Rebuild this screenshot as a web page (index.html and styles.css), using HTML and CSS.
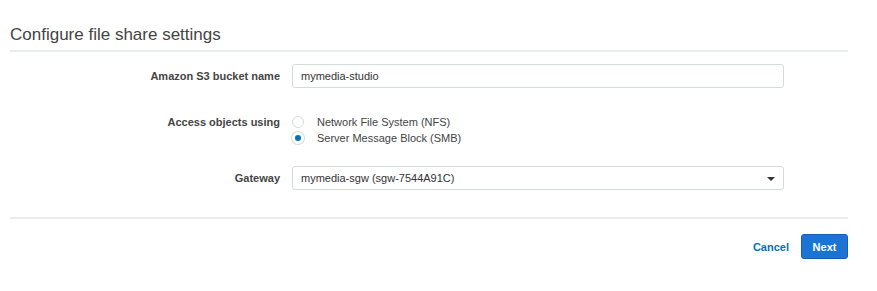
FILE: index.html
```html
<!DOCTYPE html>
<html lang="en">

<head>
    <meta charset="utf-8">
    <title>Configure file share settings</title>
    <link rel="stylesheet" href="styles.css">
</head>

<body>
    <div class="panel">
        <h2 class="titel">Configure file share settings</h2>

        <div class="felt">
            <label class="etiket">Amazon S3 bucket name</label>
            <div class="indhold">
                <div class="boks">mymedia-studio</div>
            </div>
        </div>

        <div class="felt radiofelt">
            <label class="etiket">Access objects using</label>
            <div class="indhold">
                <div class="valg"><span class="radio"></span>Network File System (NFS)</div>
                <div class="valg"><span class="radio valgt"></span>Server Message Block (SMB)</div>
            </div>
        </div>

        <div class="felt gatewayfelt">
            <label class="etiket">Gateway</label>
            <div class="indhold">
                <div class="boks vaelger">mymedia-sgw (sgw-7544A91C)<span class="pil"></span></div>
            </div>
        </div>

        <div class="knapper">
            <button class="annuller">Cancel</button>
            <button class="naeste">Next</button>
        </div>
    </div>
</body>

</html>
```

FILE: styles.css
```css
body {
    margin: 0;
    background-color: #fff;
    font-family: "Liberation Sans", Arial, sans-serif;
    color: #444;
}

.panel {
    width: 838px;
    margin-left: 10px;
}

.titel {
    margin: 0;
    padding-top: 26px;
    padding-bottom: 6px;
    font-size: 17px;
    font-weight: normal;
    line-height: 18px;
    color: #444;
    border-bottom: 2px solid #eaeded;
}

.felt {
    display: flex;
    align-items: center;
}

.felt:nth-of-type(1) {
    margin-top: 12px;
}

.etiket {
    width: 270px;
    text-align: right;
    font-size: 11px;
    font-weight: bold;
    color: #444;
    padding-right: 12px;
}

.indhold {
    width: 492px;
}

.boks {
    box-sizing: border-box;
    height: 24px;
    border: 1px solid #d5dbdb;
    border-radius: 3px;
    padding: 0 8px;
    font-size: 11px;
    line-height: 22px;
    color: #333;
}

.radiofelt {
    margin-top: 26px;
    align-items: flex-start;
}

.radiofelt .etiket {
    line-height: 16px;
}

.valg {
    display: flex;
    align-items: center;
    height: 16px;
    font-size: 11px;
    color: #444;
}

.radio {
    box-sizing: border-box;
    width: 12px;
    height: 12px;
    margin-left: 0;
    margin-right: 13px;
    border: 1px solid #d5dbdb;
    border-radius: 50%;
}

.radio.valgt {
    border: 3px solid #fff;
    background-color: #0073bb;
    box-shadow: 0 0 0 1px #d5dbdb;
}

.gatewayfelt {
    margin-top: 20px;
}

.vaelger {
    position: relative;
}

.pil {
    position: absolute;
    right: 8px;
    top: 10px;
    border-left: 4px solid transparent;
    border-right: 4px solid transparent;
    border-top: 4px solid #333;
}

.knapper {
    margin-top: 27px;
    border-top: 2px solid #eaeded;
    padding-top: 15px;
    display: flex;
    justify-content: flex-end;
    align-items: center;
}

button {
    font-family: "Liberation Sans", Arial, sans-serif;
    font-size: 11px;
    font-weight: bold;
    cursor: pointer;
}

.annuller {
    background: none;
    border: none;
    color: #0073bb;
    padding: 0;
    margin-right: 12px;
}

.naeste {
    box-sizing: border-box;
    width: 47px;
    height: 25px;
    background-color: #1b74d3;
    border: 1px solid #155fae;
    border-radius: 3px;
    color: #fff;
    padding: 0;
}
```
